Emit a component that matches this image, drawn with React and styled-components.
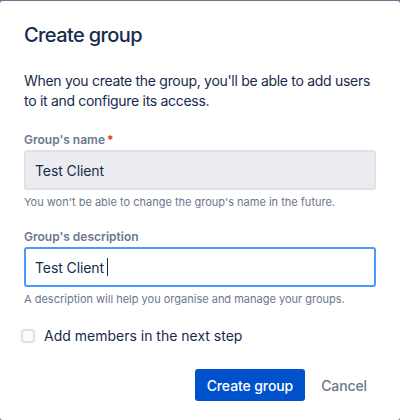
import React from 'react'
import styled, { createGlobalStyle } from 'styled-components'

const GlobalStyle = createGlobalStyle`
    html, body {
        margin: 0;
        padding: 0;
        background: #6b778c;
    }
    body {
        font-family: Inter, "Noto Sans", sans-serif;
        color: #172b4d;
    }
`

const Modal = styled.div`
    margin-top: 1px;
    background: #fff;
    border-radius: 3px;
    height: 419px;
    box-sizing: border-box;
    padding: 20px 24px 0 24px;
    display: flex;
    flex-direction: column;
`
const Title = styled.h1`
    margin: 0;
    font-size: 20px;
    font-weight: 500;
    line-height: 28px;
    letter-spacing: -0.6px;
`
const Intro = styled.p`
    margin: 22px -6px 0 0;
    font-size: 14px;
    line-height: 20px;
    letter-spacing: -0.3px;
`
const Field = styled.div`
    display: flex;
    flex-direction: column;
    margin-top: ${p => p.$top || 20}px;
`
const Label = styled.label`
    font-size: 12px;
    font-weight: 600;
    color: #6b778c;
    line-height: 16px;
    margin-bottom: 2px;
    span{
        color: #de350b;
        margin-left: 2px;
    }
`
const Input = styled.div`
    height: 40px;
    box-sizing: border-box;
    border: 2px solid ${p => p.$focused ? '#4c9aff' : '#dfe1e6'};
    background: ${p => p.$disabled ? '#ebecf0' : '#fff'};
    border-radius: 3px;
    display: flex;
    align-items: center;
    padding: 0 9px;
    font-size: 14px;
    letter-spacing: -0.1px;
`
const Caret = styled.span`
    display: inline-block;
    width: 1px;
    height: 18px;
    background: #172b4d;
    margin-left: 3px;
`
const Help = styled.div`
    font-size: 11px;
    color: #6b778c;
    line-height: 16px;
    margin-top: 4px;
`
const CheckRow = styled.label`
    display: flex;
    align-items: center;
    margin-top: 20px;
    margin-left: -3px;
    font-size: 14px;
    gap: 9px;
`
const Box = styled.span`
    width: 10px;
    height: 10px;
    border: 2px solid #dfe1e6;
    background: #fafbfc;
    border-radius: 3px;
`
const Footer = styled.div`
    display: flex;
    justify-content: flex-end;
    gap: 4px;
    margin-top: 25px;
    margin-right: -3px;
`
const Button = styled.button`
    height: 32px;
    border: none;
    border-radius: 3px;
    padding: 0 12px;
    font-family: inherit;
    font-size: 14px;
    font-weight: 500;
    letter-spacing: -0.1px;
    background: ${p => p.$primary ? '#0052cc' : 'transparent'};
    color: ${p => p.$primary ? '#fff' : '#6b778c'};
`

export default function App() {
    return (
        <>
            <GlobalStyle />
            <Modal>
                <Title>Create group</Title>
                <Intro>When you create the group, you'll be able to add users to it and configure its access.</Intro>
                <Field $top={21}>
                    <Label>Group's name<span>*</span></Label>
                    <Input $disabled>Test Client</Input>
                    <Help>You won't be able to change the group's name in the future.</Help>
                </Field>
                <Field $top={19}>
                    <Label>Group's description</Label>
                    <Input $focused>Test Client<Caret /></Input>
                    <Help>A description will help you organise and manage your groups.</Help>
                </Field>
                <CheckRow>
                    <Box />
                    Add members in the next step
                </CheckRow>
                <Footer>
                    <Button $primary>Create group</Button>
                    <Button>Cancel</Button>
                </Footer>
            </Modal>
        </>
    )
}
